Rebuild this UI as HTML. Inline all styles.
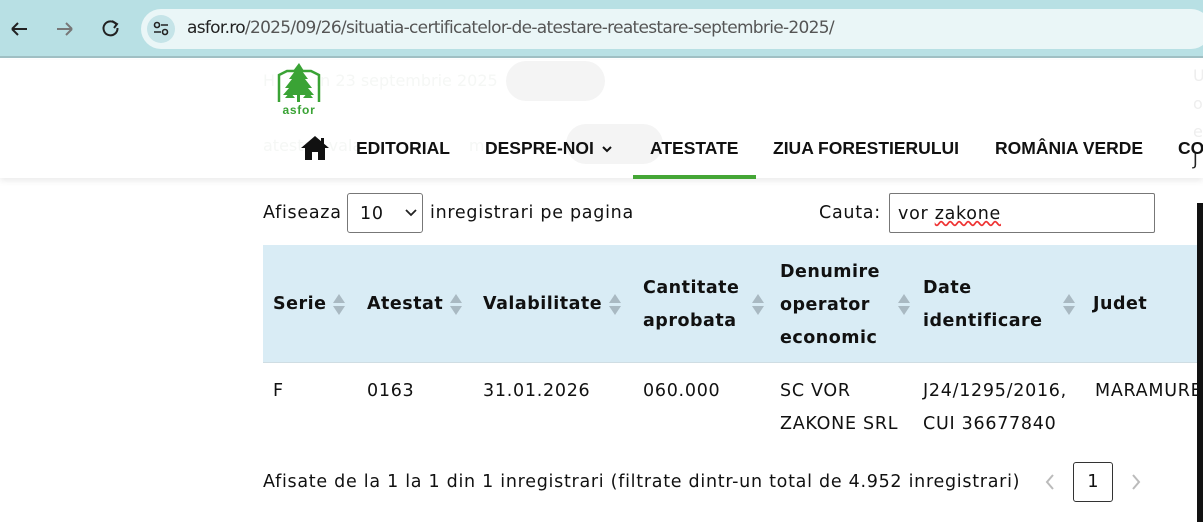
<!DOCTYPE html>
<html><head><meta charset="utf-8"><style>
*{margin:0;padding:0;box-sizing:border-box}
body{width:1203px;height:522px;overflow:hidden;background:#fff;position:relative;font-family:"DejaVu Sans","Liberation Sans",sans-serif;color:#111;font-size:17.5px;letter-spacing:0.72px}
.a{position:absolute;white-space:nowrap}
.bar{position:absolute;left:0;top:0;width:1203px;height:58px;background:#b8e0e4;border-bottom:2px solid #9fbfc3}
.url{position:absolute;left:141px;top:9px;width:1070px;height:40px;border-radius:20px;background:#eaf6f7}
.nav{font-family:"Liberation Sans",Arial,sans-serif;font-weight:bold;font-size:17.5px;top:138px;color:#111;letter-spacing:0}
.th{font-weight:bold;font-size:17.5px;line-height:33px;letter-spacing:0.5px}
.s{position:absolute;width:12px;height:26px}
.g{color:#f5f7f5;font-size:16px;letter-spacing:0}
</style></head><body>
<div class="bar"></div>
<div class="url"></div>
<svg class="a" style="left:8px;top:18px" width="120" height="22" viewBox="0 0 120 22">
<path d="M4 11h15M4 11l6-6M4 11l6 6" stroke="#222" stroke-width="2" fill="none"/>
<path d="M49 11h15M64 11l-6-6M64 11l-6 6" stroke="#777" stroke-width="2" fill="none"/>
<path d="M108 6a7 7 0 1 0 1.5 4" stroke="#222" stroke-width="2" fill="none"/><path d="M104 3l5 3-3 4" stroke="#222" stroke-width="2" fill="none"/>
</svg>
<div class="a" style="left:147px;top:15px;width:28px;height:28px;border-radius:14px;background:#c5e4e8"></div>
<svg class="a" style="left:151px;top:19px" width="20" height="20"><circle cx="6" cy="6" r="2.5" stroke="#222" fill="none" stroke-width="1.6"/><path d="M10 6h7M3 13h7" stroke="#222" stroke-width="1.6"/><circle cx="14" cy="13" r="2.5" stroke="#222" fill="none" stroke-width="1.6"/></svg>
<div class="a" style="left:187px;top:18px;font-size:17px;color:#222;font-family:'DejaVu Sans',sans-serif;letter-spacing:-0.7px">asfor.ro<span style="color:#555">/2025/09/26/situatia-certificatelor-de-atestare-reatestare-septembrie-2025/</span></div>

<div class="a" style="left:0;top:60px;width:1203px;height:118px;background:#fff;box-shadow:0 3px 6px rgba(0,0,0,.08)"></div>
<div class="a g" style="left:263px;top:71px">H&nbsp;&nbsp;&nbsp;&nbsp;&nbsp;&nbsp;&nbsp;&nbsp;in 23 septembrie 2025</div>
<div class="a" style="left:506px;top:61px;width:99px;height:40px;border-radius:20px;background:#f4f4f4"></div>
<div class="a" style="left:566px;top:124px;width:97px;height:40px;border-radius:20px;background:#f4f4f4"></div>
<div class="a g" style="left:263px;top:136px">atesta&nbsp;&nbsp;&nbsp;vala&nbsp;&nbsp;&nbsp;&nbsp;&nbsp;&nbsp;&nbsp;&nbsp;&nbsp;&nbsp;&nbsp;&nbsp;&nbsp;&nbsp;&nbsp;&nbsp;&nbsp;&nbsp;&nbsp;&nbsp;&nbsp;m</div>
<svg class="a" style="left:275px;top:62px" width="48" height="54" viewBox="0 0 48 54">
<path d="M4 40V13l8-4h24l8 4v27" stroke="#3aa335" stroke-width="2.5" fill="none"/>
<path d="M24 1l5 8h-2l6 8h-3l7 9h-4l6 7H8l6-7h-4l7-9h-3l6-8h-2z" fill="#3aa335"/>
<path d="M10 36l5-6 5 6zM28 36l5-6 5 6z" fill="#3aa335"/>
<rect x="22" y="32" width="3" height="8" fill="#3aa335"/>
<text x="24" y="52" text-anchor="middle" font-family="Liberation Sans" font-weight="bold" font-size="12" fill="#3aa335">asfor</text>
</svg>
<svg class="a" style="left:300px;top:135px" width="30" height="26" viewBox="0 0 30 26"><path d="M15 1L1 13h4v12h7v-8h6v8h7V13h4z" fill="#111"/><rect x="21" y="3" width="3" height="6" fill="#111"/></svg>
<div class="a nav" style="left:356px">EDITORIAL</div>
<div class="a nav" style="left:485px">DESPRE-NOI</div>
<svg class="a" style="left:602px;top:146px" width="10" height="7"><path d="M1 1l4 4 4-4" stroke="#111" stroke-width="2" fill="none"/></svg>
<div class="a nav" style="left:650px">ATESTATE</div>
<div class="a" style="left:633px;top:175px;width:123px;height:4px;background:#44a636"></div>
<div class="a nav" style="left:773px">ZIUA FORESTIERULUI</div>
<div class="a nav" style="left:995px">ROMÂNIA VERDE</div>
<div class="a nav" style="left:1178px">CO</div>

<div class="a" style="left:263px;top:203px">Afiseaza</div>
<div class="a" style="left:347px;top:193px;width:76px;height:40px;border:1px solid #777;border-radius:3px;background:#fff"></div>
<div class="a" style="left:360px;top:204px">10</div>
<svg class="a" style="left:405px;top:209px" width="12" height="8"><path d="M1 1l5 5 5-5" stroke="#222" stroke-width="1.8" fill="none"/></svg>
<div class="a" style="left:430px;top:203px">inregistrari pe pagina</div>
<div class="a" style="left:819px;top:203px">Cauta:</div>
<div class="a" style="left:889px;top:193px;width:266px;height:40px;border:1px solid #777;border-radius:2px"></div>
<div class="a" style="left:898px;top:204px">vor <span style="text-decoration:underline wavy #e33">zakone</span></div>

<div class="a" style="left:263px;top:245px;width:940px;height:118px;background:#d9ecf5;border-bottom:1px solid #cfdde3"></div>
<div class="a th" style="left:273px;top:288px">Serie</div>
<div class="a th" style="left:367px;top:288px">Atestat</div>
<div class="a th" style="left:483px;top:288px">Valabilitate</div>
<div class="a th" style="left:643px;top:272px">Cantitate<br>aprobata</div>
<div class="a th" style="left:780px;top:256px">Denumire<br>operator<br>economic</div>
<div class="a th" style="left:923px;top:272px">Date<br>identificare</div>
<div class="a th" style="left:1093px;top:288px">Judet</div>
<svg width="0" height="0" style="position:absolute"><defs><g id="ar"><path d="M0 12L6 3l6 9z M0 15l6 9 6-9z" fill="#a9b9c2"/></g></defs></svg>
<svg class="s" style="left:333px;top:291px"><use href="#ar"/></svg>
<svg class="s" style="left:450px;top:291px"><use href="#ar"/></svg>
<svg class="s" style="left:609px;top:291px"><use href="#ar"/></svg>
<svg class="s" style="left:752px;top:291px"><use href="#ar"/></svg>
<svg class="s" style="left:898px;top:291px"><use href="#ar"/></svg>
<svg class="s" style="left:1063px;top:291px"><use href="#ar"/></svg>

<div class="a" style="left:273px;top:375px;line-height:33px">F</div>
<div class="a" style="left:367px;top:375px;line-height:33px">0163</div>
<div class="a" style="left:483px;top:375px;line-height:33px">31.01.2026</div>
<div class="a" style="left:643px;top:375px;line-height:33px">060.000</div>
<div class="a" style="left:780px;top:375px;line-height:33px">SC VOR<br>ZAKONE SRL</div>
<div class="a" style="left:923px;top:375px;line-height:33px">J24/1295/2016,<br>CUI 36677840</div>
<div class="a" style="left:1095px;top:375px;line-height:33px">MARAMURES</div>

<div class="a" style="left:263px;top:472px">Afisate de la 1 la 1 din 1 inregistrari (filtrate dintr-un total de 4.952 inregistrari)</div>
<svg class="a" style="left:1045px;top:474px" width="10" height="16"><path d="M8 1L2 8l6 7" stroke="#bbb" stroke-width="2" fill="none"/></svg>
<div class="a" style="left:1073px;top:462px;width:40px;height:40px;border:1px solid #333;border-radius:3px;text-align:center;line-height:38px;letter-spacing:0">1</div>
<svg class="a" style="left:1131px;top:474px" width="10" height="16"><path d="M2 1l6 7-6 7" stroke="#bbb" stroke-width="2" fill="none"/></svg>

<div class="a" style="left:1197px;top:203px;width:6px;height:319px;background:#111"></div>
<div class="a" style="left:1193px;top:62px;color:#eee;font-size:16px;line-height:28px;letter-spacing:0">U<br>o<br>e<br><span style="color:#222">J</span></div>
</body></html>
